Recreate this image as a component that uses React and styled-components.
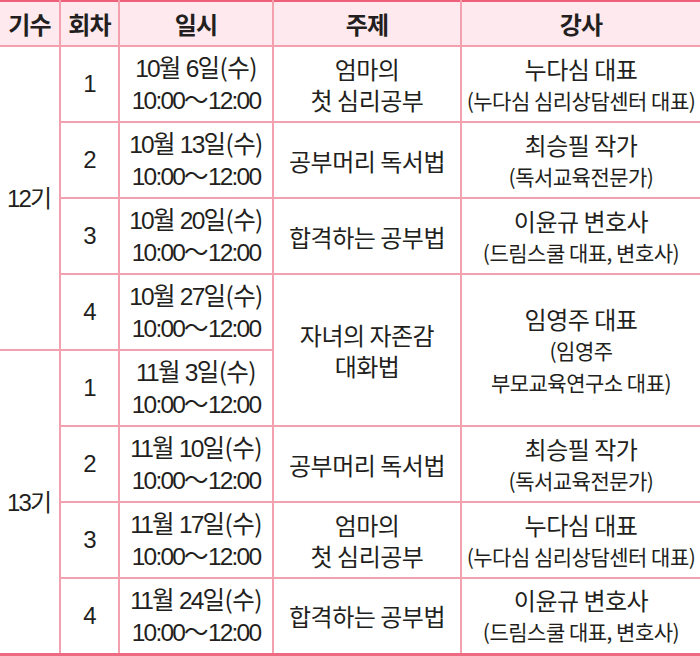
import React from 'react';
import styled, { createGlobalStyle } from 'styled-components';

const GlobalStyle = createGlobalStyle`
    html, body {
        margin: 0;
        padding: 0;
        background: #fff;
    }
    body {
        font-family: "Liberation Sans", "Noto Sans CJK KR", sans-serif;
        color: #231f20;
    }
`;

const LINE = '#f3a1af';

const Table = styled.table`
    width: 700px;
    border-collapse: collapse;
    table-layout: fixed;
    border-top: 2px solid #ee5f79;
    border-bottom: 3px solid #ee6a82;
`;

const HeadRow = styled.tr`
    height: 45px;
    background: #fee9ee;
`;

const HeadCell = styled.th`
    font-family: "Noto Sans CJK KR", sans-serif;
    font-size: 24px;
    font-weight: 700;
    letter-spacing: -0.8px;
    padding: 0;
    border-left: 2px solid ${LINE};
    border-bottom: 2px solid ${LINE};

    &:first-child {
        border-left: none;
    }
`;

const Row = styled.tr`
    height: 76px;
`;

const Cell = styled.td`
    padding: 0;
    text-align: center;
    vertical-align: middle;
    border-left: 2px solid ${LINE};
    border-top: 2px solid ${LINE};
    font-size: 24px;
    letter-spacing: -1px;
    line-height: 30px;
`;

const Term = styled(Cell)`
    border-left: none;
    letter-spacing: -1.8px;

    span {
        font-family: "Noto Sans CJK KR", sans-serif;
        letter-spacing: 0;
    }
`;

const Topic = styled.div`
    font-family: "Noto Sans CJK KR", sans-serif;
    font-size: 24px;
    letter-spacing: -0.5px;
    line-height: 31px;
    white-space: pre-line;
`;

const Line = styled.div`
    font-family: "Noto Sans CJK KR", sans-serif;
    font-size: ${props => (props.$small ? 21 : 24)}px;
    letter-spacing: -0.5px;
    line-height: ${props => (props.$small ? 32 : 31)}px;
`;

const Mixed = styled.div`
    font-size: 24.5px;
    letter-spacing: -1.8px;
    line-height: 30px;

    span {
        font-family: "Noto Sans CJK KR", sans-serif;
        letter-spacing: -0.6px;
    }
`;

const COLS = [
    ['기수', 60],
    ['회차', 59],
    ['일시', 154],
    ['주제', 188],
    ['강사', 239],
];

const rows = [
    { term: '12', termSpan: 4, no: 1, month: '10', day: '6', topic: '엄마의\n첫 심리공부', lecturer: ['누다심 대표', '(누다심 심리상담센터 대표)'] },
    { no: 2, month: '10', day: '13', topic: '공부머리 독서법', lecturer: ['최승필 작가', '(독서교육전문가)'] },
    { no: 3, month: '10', day: '20', topic: '합격하는 공부법', lecturer: ['이윤규 변호사', '(드림스쿨 대표, 변호사)'] },
    { no: 4, month: '10', day: '27', topic: '자녀의 자존감\n대화법', span: 2, lecturer: ['임영주 대표', '(임영주', '부모교육연구소 대표)'] },
    { term: '13', termSpan: 4, no: 1, month: '11', day: '3', merged: true },
    { no: 2, month: '11', day: '10', topic: '공부머리 독서법', lecturer: ['최승필 작가', '(독서교육전문가)'] },
    { no: 3, month: '11', day: '17', topic: '엄마의\n첫 심리공부', lecturer: ['누다심 대표', '(누다심 심리상담센터 대표)'] },
    { no: 4, month: '11', day: '24', topic: '합격하는 공부법', lecturer: ['이윤규 변호사', '(드림스쿨 대표, 변호사)'] },
];

function DateCell({ month, day }) {
    return (
        <Cell>
            <Mixed>
                {month}<span>월</span> {day}<span>일(수)</span>
            </Mixed>
            <Mixed>
                10:00<span>～</span>12:00
            </Mixed>
        </Cell>
    );
}

export default function App() {
    return (
        <>
            <GlobalStyle />
            <Table>
                <colgroup>
                    {COLS.map(([name, w]) => (
                        <col key={name} style={{ width: w }} />
                    ))}
                </colgroup>
                <thead>
                    <HeadRow>
                        {COLS.map(([name]) => (
                            <HeadCell key={name}>{name}</HeadCell>
                        ))}
                    </HeadRow>
                </thead>
                <tbody>
                    {rows.map((r, i) => (
                        <Row key={i}>
                            {r.term && (
                                <Term rowSpan={r.termSpan}>
                                    {r.term}<span>기</span>
                                </Term>
                            )}
                            <Cell>{r.no}</Cell>
                            <DateCell month={r.month} day={r.day} />
                            {!r.merged && (
                                <Cell rowSpan={r.span || 1}>
                                    <Topic>{r.topic}</Topic>
                                </Cell>
                            )}
                            {!r.merged && (
                                <Cell rowSpan={r.span || 1}>
                                    {r.lecturer.map((t, j) => (
                                        <Line key={t} $small={j > 0}>{t}</Line>
                                    ))}
                                </Cell>
                            )}
                        </Row>
                    ))}
                </tbody>
            </Table>
        </>
    );
}
